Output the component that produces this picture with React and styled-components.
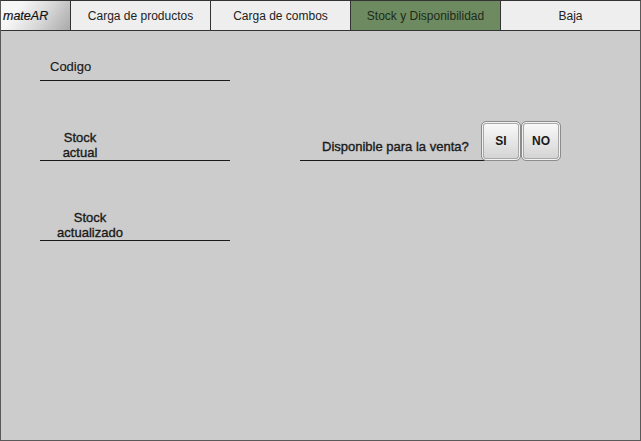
import React from "react";
import styled, { createGlobalStyle } from "styled-components";

const GlobalStyle = createGlobalStyle`
  html, body {
    margin: 0;
    padding: 0;
    background: #cccccc;
  }
  * {
    box-sizing: border-box;
  }
`;

const Frame = styled.div`
  width: 641px;
  height: 441px;
  display: flex;
  flex-direction: column;
  border: 1px solid #5a5a5a;
  border-top-color: #333;
  background: #cccccc;
  font-family: "Liberation Sans", Arial, sans-serif;
  color: #1a1a1a;
`;

const TabBar = styled.nav`
  display: grid;
  grid-template-columns: 70px 140px 140px 150px 1fr;
  height: 30px;
  border-bottom: 1px solid #333;
`;

const Tab = styled.div`
  display: flex;
  align-items: center;
  justify-content: center;
  font-size: 12px;
  background: ${(p) => (p.active ? "#6d8a60" : "#eeeeee")};
  color: ${(p) => (p.active ? "#1e2a1a" : "#222")};
  border-right: ${(p) => (p.last ? "none" : "1px solid #333")};
`;

const Brand = styled.div`
  display: flex;
  align-items: center;
  padding-left: 2px;
  font-size: 12.5px;
  font-style: italic;
  color: #111;
  -webkit-text-stroke: 0.2px #111;
  background: linear-gradient(125deg, #f6f6f6 25%, #d8d8d8 60%, #a9a9a9);
  border-right: 1px solid #333;
`;

const Content = styled.main`
  flex: 1;
  display: grid;
  grid-template-columns: 190px 1fr;
  column-gap: 70px;
  padding: 10px 0 0 39px;
  align-content: start;
`;

const Column = styled.div`
  display: flex;
  flex-direction: column;
  padding-top: ${(p) => p.offset || 0}px;
`;

const Field = styled.div`
  height: ${(p) => p.height}px;
  display: flex;
  align-items: flex-end;
  border-bottom: 1px solid #1a1a1a;
`;

const Label = styled.label`
  width: ${(p) => p.width}px;
  padding-left: ${(p) => p.indent || 0}px;
  padding-bottom: ${(p) => p.below || 0}px;
  font-size: 13px;
  line-height: 15px;
  text-align: ${(p) => (p.center ? "center" : "left")};
  -webkit-text-stroke: ${(p) => (p.heavy ? "0.35px" : "0.15px")} #1a1a1a;
`;

const SaleRow = styled.div`
  height: 80px;
  display: flex;
  align-items: flex-end;
`;

const SaleLabel = styled.div`
  width: 185px;
  padding: 0 0 6px 22px;
  font-size: 13px;
  line-height: 15px;
  -webkit-text-stroke: 0.35px #1a1a1a;
  border-bottom: 1px solid #1a1a1a;
`;

const Choices = styled.div`
  display: flex;
  margin-left: -4px;
`;

const Choice = styled.button`
  width: 40px;
  height: 40px;
  border: 1px solid #8c8c8c;
  border-radius: 5px;
  box-shadow: inset 0 0 0 1px #f2f2f2, inset 0 0 0 2px #a8a8a8;
  background: linear-gradient(#fbfbfb, #d2d2d2);
  font-family: "Liberation Sans", Arial, sans-serif;
  font-size: 12px;
  font-weight: bold;
  color: #1a1a1a;
  padding: 0;
`;

export default function App() {
  return (
    <>
      <GlobalStyle />
      <Frame>
        <TabBar>
          <Brand>mateAR</Brand>
          <Tab>Carga de productos</Tab>
          <Tab>Carga de combos</Tab>
          <Tab active>Stock y Disponibilidad</Tab>
          <Tab last>Baja</Tab>
        </TabBar>
        <Content>
          <Column>
            <Field height={40}>
              <Label width={80} indent={10} below={6}>
                Codigo
              </Label>
            </Field>
            <Field height={80}>
              <Label width={80} center heavy>
                Stock
                <br />
                actual
              </Label>
            </Field>
            <Field height={80}>
              <Label width={100} center heavy>
                Stock
                <br />
                actualizado
              </Label>
            </Field>
          </Column>
          <Column offset={40}>
            <SaleRow>
              <SaleLabel>Disponible para la venta?</SaleLabel>
              <Choices>
                <Choice>SI</Choice>
                <Choice>NO</Choice>
              </Choices>
            </SaleRow>
          </Column>
        </Content>
      </Frame>
    </>
  );
}
